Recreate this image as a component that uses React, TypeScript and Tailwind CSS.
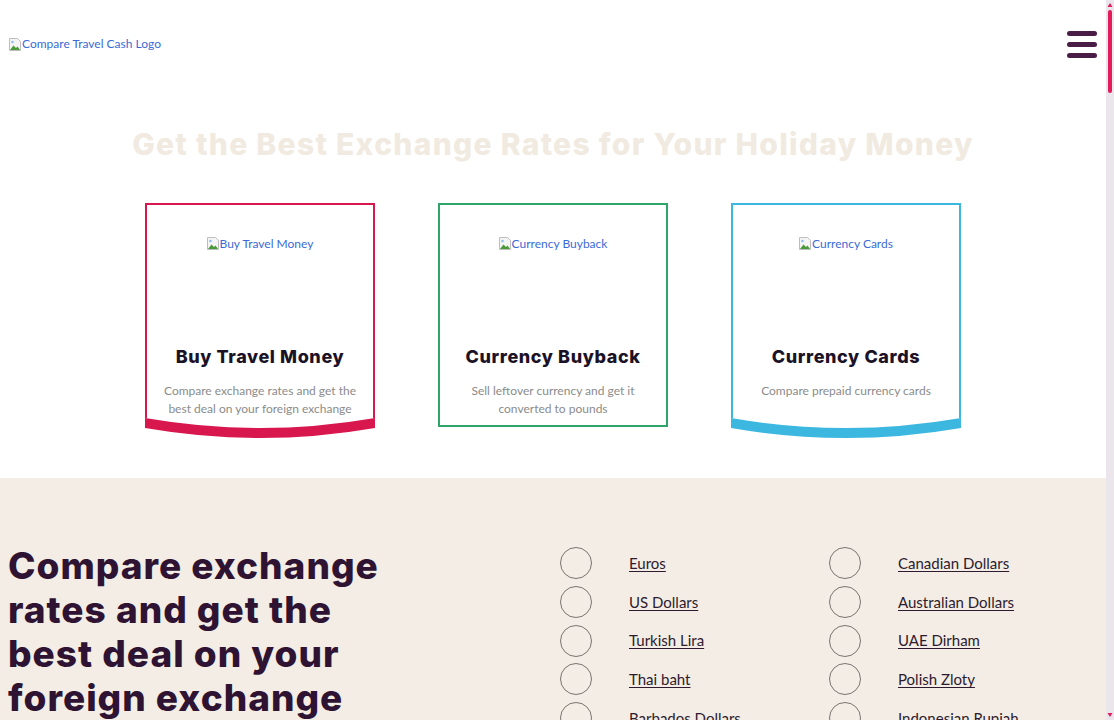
const heading = "font-['Inter',sans-serif] font-extrabold";
const body = "font-['Lato','Open_Sans',sans-serif]";

function BrokenImage({ alt }: { alt: string }) {
  return (
    <span className={`inline-flex items-center text-[12px] leading-5 text-[#3a6bd6] ${body}`}>
      <svg width="12" height="13" viewBox="0 0 12 13" className="shrink-0 mr-[1px]">
        <path d="M0.5 0.5h8l3 3v9h-11z" fill="#f4f4f4" stroke="#bdbdbd" />
        <path d="M1 12 4.5 7.5l2.5 2.5 1.5-1.5L11 12z" fill="#4a9a3a" />
        <circle cx="3.5" cy="4" r="1.2" fill="#8bb8e8" />
      </svg>
      {alt}
    </span>
  );
}

function Band({ color }: { color: string }) {
  return (
    <svg width="230" height="20" viewBox="0 0 230 20" className="block">
      <path d="M0 0 Q115 20 230 0 L230 10 Q115 30 0 10 Z" fill={color} />
    </svg>
  );
}

type Card = { title: string; text: string; color: string; curved: boolean };

const cards: Card[] = [
  {
    title: "Buy Travel Money",
    text: "Compare exchange rates and get the best deal on your foreign exchange",
    color: "#d9174f",
    curved: true,
  },
  {
    title: "Currency Buyback",
    text: "Sell leftover currency and get it converted to pounds",
    color: "#2fa56c",
    curved: false,
  },
  {
    title: "Currency Cards",
    text: "Compare prepaid currency cards",
    color: "#3cb8e0",
    curved: true,
  },
];

function ServiceCard({ card }: { card: Card }) {
  const inner = (
    <div className="flex flex-col items-center pt-[27px] px-3 text-center">
      <div className="h-[112px]">
        <BrokenImage alt={card.title} />
      </div>
      <h3 className={`text-[18px] leading-[26px] tracking-[0.6px] text-[#1c1226] ${heading}`}>{card.title}</h3>
      <p className={`mt-3 text-[12px] leading-[18px] text-[#8b8b8b] ${body}`}>{card.text}</p>
    </div>
  );
  if (!card.curved) {
    return (
      <div className="w-[230px] h-[224px] border-2" style={{ borderColor: card.color }}>
        {inner}
      </div>
    );
  }
  return (
    <div className="w-[230px] flex flex-col">
      <div className="h-[215px] border-2 border-b-0" style={{ borderColor: card.color }}>
        {inner}
      </div>
      <Band color={card.color} />
    </div>
  );
}

const currencies = [
  ["Euros", "Canadian Dollars"],
  ["US Dollars", "Australian Dollars"],
  ["Turkish Lira", "UAE Dirham"],
  ["Thai baht", "Polish Zloty"],
  ["Barbados Dollars", "Indonesian Rupiah"],
  ["Japanese Yen", "Swiss Francs"],
  ["Hungarian Forint", "Czech Koruna"],
  ["Mexican Peso", "New Zealand Dollars"],
];

function CurrencyRow({ name }: { name: string }) {
  return (
    <div className="h-[38.7px] flex items-center">
      <span className="w-8 h-8 rounded-full border border-[#7b7370] shrink-0" />
      <a href="#" className={`ml-[37px] text-[15px] text-[#2e1b2f] underline underline-offset-2 ${body}`}>
        {name}
      </a>
    </div>
  );
}

const guides = [
  "Best time to buy foreign currency",
  "How to avoid airport exchange fees",
  "Using your debit card abroad",
  "Prepaid cards explained",
  "Bringing currency home",
  "Sending money overseas",
];

function Scrollbar() {
  return (
    <aside className="w-2 h-screen sticky top-0 shrink-0 bg-[#ebe6ec] flex flex-col items-center">
      <svg width="6" height="6" viewBox="0 0 6 6" className="mt-[2px]">
        <path d="M3 1 5.5 5h-5z" fill="#e31b5b" />
      </svg>
      <div className="mt-[2px] w-[4px] h-[83px] rounded-full bg-[#e31b5b]" />
      <div className="flex-1" />
      <svg width="6" height="6" viewBox="0 0 6 6" className="mb-[2px]">
        <path d="M3 5 5.5 1h-5z" fill="#e31b5b" />
      </svg>
    </aside>
  );
}

export default function App() {
  return (
    <div className="flex bg-white">
      <main className="flex-1 min-w-0">
        <header className="h-[88px] flex items-center justify-between px-[9px]">
          <BrokenImage alt="Compare Travel Cash Logo" />
          <button className="flex flex-col gap-[6px] w-[30px]" aria-label="Menu">
            <span className="h-[5px] rounded-full bg-[#4a1d47]" />
            <span className="h-[5px] rounded-full bg-[#4a1d47]" />
            <span className="h-[5px] rounded-full bg-[#4a1d47]" />
          </button>
        </header>

        <section className="pb-10">
          <h1 className={`mt-[38px] text-center text-[30px] leading-9 tracking-[1.3px] text-[#f1eae1] ${heading}`}>
            Get the Best Exchange Rates for Your Holiday Money
          </h1>
          <div className="mt-[41px] flex justify-center items-start gap-[63px]">
            {cards.map((c) => (
              <ServiceCard key={c.title} card={c} />
            ))}
          </div>
        </section>

        <section className="bg-[#f3ede5] px-2 pt-[66px] pb-16 grid grid-cols-2">
          <h2 className={`max-w-[400px] text-[37px] leading-[44px] tracking-[1px] text-[#2e1333] ${heading}`}>
            Compare exchange rates and get the best deal on your foreign exchange
          </h2>
          <div className="pl-[7px] grid grid-cols-[269px_269px] content-start">
            {currencies.map(([a, b]) => (
              <div key={a} className="contents">
                <CurrencyRow name={a} />
                <CurrencyRow name={b} />
              </div>
            ))}
          </div>
        </section>

        <section className="px-10 py-20">
          <h2 className={`text-center text-[28px] text-[#2e1333] ${heading}`}>How it works</h2>
          <div className="mt-12 grid grid-cols-3 gap-10">
            {["Choose your currency", "Compare the rates", "Order online"].map((s, i) => (
              <div key={s} className="h-[320px] rounded-lg bg-[#f8f5f1] p-8">
                <div className={`text-[40px] text-[#d9174f] ${heading}`}>{i + 1}</div>
                <p className={`mt-4 text-lg text-[#2e1b2f] ${body}`}>{s}</p>
              </div>
            ))}
          </div>
        </section>

        <section className="bg-[#f3ede5] px-10 py-20">
          <h2 className={`text-[28px] text-[#2e1333] ${heading}`}>Travel money guides</h2>
          <div className="mt-10 grid grid-cols-2 gap-8">
            {guides.map((g) => (
              <div key={g} className="h-[420px] bg-white p-6">
                <p className={`text-lg text-[#2e1b2f] ${body}`}>{g}</p>
              </div>
            ))}
          </div>
        </section>

        <section className="px-10 py-20">
          <h2 className={`text-[28px] text-[#2e1333] ${heading}`}>Frequently asked questions</h2>
          <div className="mt-8 flex flex-col gap-4">
            {Array.from({ length: 12 }, (_, i) => (
              <div key={i} className="h-[90px] border-b border-[#e5ded6] py-6">
                <p className={`text-base text-[#2e1b2f] ${body}`}>Question {i + 1}</p>
              </div>
            ))}
          </div>
        </section>

        <footer className="bg-[#2e1333] h-[900px] px-10 py-16">
          <p className={`text-sm text-[#f3ede5] ${body}`}>© Compare Travel Cash</p>
        </footer>
      </main>
      <Scrollbar />
    </div>
  );
}
